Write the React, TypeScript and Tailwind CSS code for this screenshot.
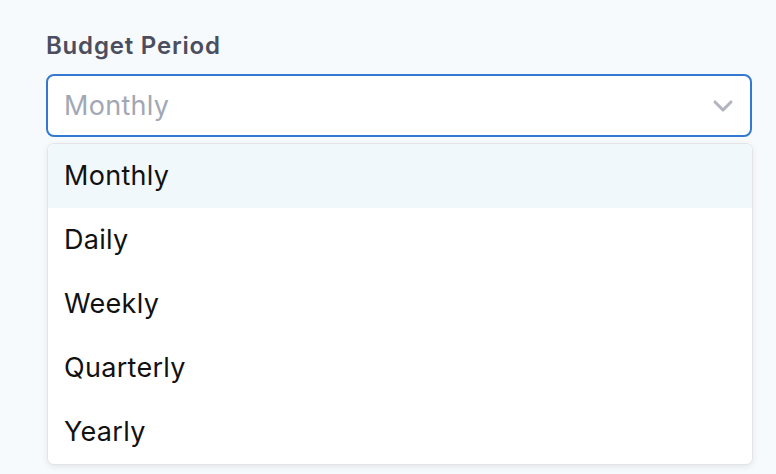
import { ChevronDown } from 'lucide-react'

const OPTIONS = ['Monthly', 'Daily', 'Weekly', 'Quarterly', 'Yearly']

export default function App() {
  return (
    <div className="min-h-screen w-[776px] h-[474px] overflow-hidden bg-[#f7fafd] font-['Inter',sans-serif]">
      <div className="pl-[46px] pt-[30px]">
        <label className="block text-[24px] font-semibold text-[#4b4e5e] leading-[32px] tracking-[0.8px]">
          Budget Period
        </label>

        {/* select trigger */}
        <div className="mt-[12px] w-[706px] h-[63px] flex items-center justify-between rounded-[8px] border-2 border-[#3479d1] bg-white pl-[16px] pr-[11px]">
          <span className="text-[27px] text-[#a2a8b3] tracking-[0.3px] pt-[1px]">Monthly</span>
          <ChevronDown className="w-[32px] h-[32px] text-[#b3b3bf]" strokeWidth={2.3} />
        </div>

        {/* options list */}
        <div className="mt-[6px] ml-[1px] w-[706px] rounded-[7px] border border-[#e4e4e6] bg-white shadow-[0_2px_6px_rgba(0,0,0,0.08)] overflow-hidden">
          {OPTIONS.map((opt, i) => (
            <div
              key={opt}
              className={[
                'h-[64px] flex items-center pl-[16px] pt-[1px] text-[27px] text-[#111111] tracking-[0.3px]',
                i === 0 ? 'bg-[#f1f8fc]' : '',
              ].join(' ')}
            >
              {opt}
            </div>
          ))}
        </div>
      </div>
    </div>
  )
}
